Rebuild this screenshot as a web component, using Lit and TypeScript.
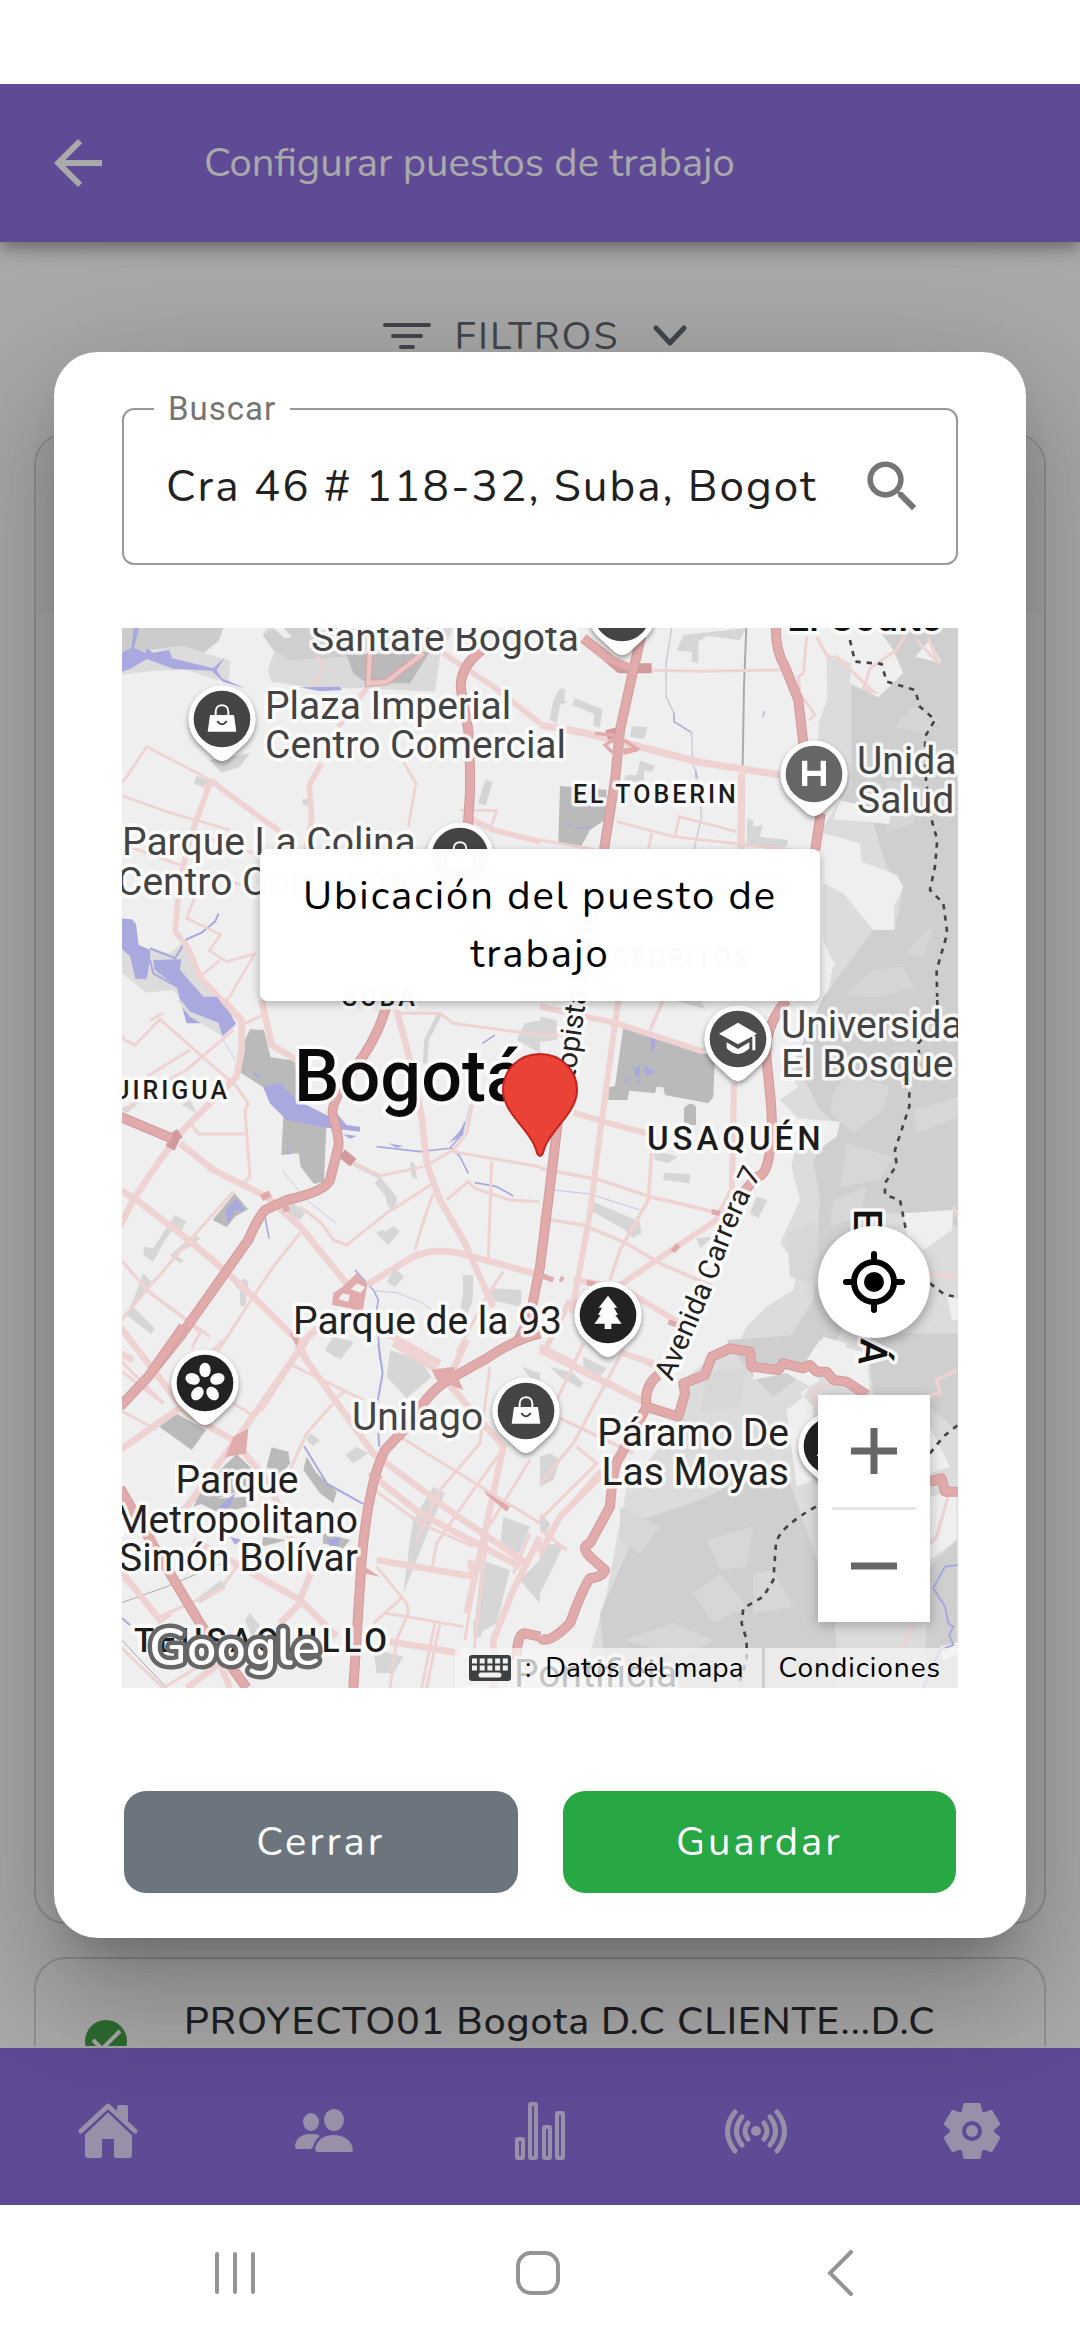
import { LitElement, html, svg, css } from "lit";
import { customElement, property } from "lit/decorators.js";

type Pt = { x: number; y: number; kind: string; tone: string };

const PINS: Pt[] = [
  { x: 622, y: 613, kind: "bag", tone: "#444" },
  { x: 222, y: 719, kind: "bag", tone: "#444" },
  { x: 460, y: 856, kind: "bag", tone: "#444" },
  { x: 814, y: 774, kind: "hospital", tone: "#666" },
  { x: 738, y: 1039, kind: "school", tone: "#4c4c4c" },
  { x: 608, y: 1315, kind: "tree", tone: "#222" },
  { x: 205, y: 1383, kind: "flower", tone: "#222" },
  { x: 526, y: 1411, kind: "bag", tone: "#444" },
  { x: 832, y: 1446, kind: "peak", tone: "#222" },
  { x: 475, y: 1718, kind: "none", tone: "#bbb" },
];

const glyph = (kind: string) => {
  switch (kind) {
    case "bag":
      return svg`<path d="M-36-12H36L43 38H-43Z" fill="#fff"/><path d="M-19-10V-22C-19-48 19-48 19-22V-10" fill="none" stroke="#fff" stroke-width="6"/><path d="M-14 6Q0 26 14 6" fill="none" stroke="#444" stroke-width="6"/>`;
    case "hospital":
      return svg`<path d="M-28-40V36M28-40V36M-28-2H28" stroke="#fff" stroke-width="16" fill="none"/>`;
    case "school":
      return svg`<path d="M-57-16L0-49L57-16L0 16Z M-34 10V28Q0 62 34 28V10L0 30Z M43-10H52V34H43Z" fill="#fff"/>`;
    case "tree":
      return svg`<path d="M0-58L28-22H18L30 0H22L41 26H10V42H-10V26H-41L-22 0H-30L-18-22H-28Z" fill="#fff"/>`;
    case "flower":
      return svg`${[0, 72, 144, 216, 288].map((a) => svg`<ellipse cx="0" cy="-39" rx="17" ry="22" fill="#fff" transform="rotate(${a})"/>`)}<circle r="14" fill="#222"/>`;
    case "peak":
      return svg`<path d="M-46 30L-10-34L12 0L24-14L46 30Z" fill="#fff"/>`;
    default:
      return svg``;
  }
};

const pin = (p: Pt) => svg`
  <g transform="translate(${p.x} ${p.y}) scale(.3333)">
    <path class="pin" d="M-75 68L-25 115Q0 138 25 115L75 68A101 101 0 1 0-75 68Z" fill="#fff"/>
    <circle r="85" fill=${p.tone}/>
    ${glyph(p.kind)}
  </g>`;

/* The tiles are drawn at three units per pixel, two columns by three rows. */
const MAP = svg`
<g transform="translate(120 620) scale(.3333)">
  <path fill="#ccc" d="M0 20H312L296 62L252 98L190 90L150 82L70 95L0 130Z"/>
  <path fill="#dcdcdc" d="M150 82L190 78L252 98L332 122L326 188L300 182L200 150L100 152L0 165V120L70 100Z"/>
  <path fill="#dadada" d="M440 24H1000L960 110L945 215L740 205L590 205L455 185L443 152L462 95L428 45Z"/>
  <path fill="#cfcfcf" d="M470 24H590L680 70L690 110L510 120L462 90L428 45Z"/>
  <path fill="#bababa" d="M680 105L930 95L870 190H740L700 160Z"/>
  <path fill="#efefef" d="M460 24H490L516 50L495 55Z"/>
  <path fill="#d4d4d4" d="M230 468L270 482L258 506L222 490Z M1096 480L1118 486L1098 556L1074 550Z M268 420L390 400L360 440L305 458Z M550 536L568 540V560L546 552Z"/>
  <path fill="#dcdcdc" d="M6 930L60 980L150 1000L190 965L260 1090L340 1190L330 1200H230L160 1110L80 1118L6 1060Z"/>
  <path fill="#a9a9e0" d="M58 20L42 84L75 98L80 85L100 98L148 90L156 115L280 145L315 112L290 150L306 175L376 205L310 186L275 152L160 146L80 117L30 147L0 157V100L34 84L42 20Z
    M0 895L35 898L48 912L56 975L90 990V1020L80 1078L46 1076L30 1008L0 982Z M100 1020L184 1018L180 1050L250 1130L300 1150L345 1210H200L170 1100L104 1050Z M540 202L660 200L665 210L600 214Z"/>
  <path fill="none" stroke="#a9a9e0" stroke-width="6" d="M296 880L285 905L245 938L200 958L165 1015L90 985 M90 1020L100 1060L180 1105L200 1200"/>
  <path fill="none" stroke="#efd2d2" stroke-width="8" d="M0 500L80 380L290 490 M0 525L140 575L330 630 M590 110L615 142L575 200 M850 425L888 490L865 620 M1020 570L1130 572L1110 630 M225 830L200 895L302 944L268 992L320 1025L408 1000 M405 1000L320 1145 M300 1020L240 1070 M180 735L0 670 M90 1200L130 1180 M400 700L220 640 M280 770L420 812"/>
  <path fill="none" stroke="#efd2d2" stroke-width="17" d="M270 490L215 640L180 780L165 935L205 985L240 1070L360 1200 M270 480L350 540L480 635 M740 205L655 320 M1030 585L1120 630L1260 665 M970 100L1120 200L1260 310 M605 430L568 495L575 600L555 700 M250 500L290 485"/>
  <path fill="none" stroke="#d9a0a0" stroke-width="20" d="M750 100L745 190L800 185L910 100"/>
  <path fill="none" stroke="#ecc4c4" stroke-width="14" d="M750 100L745 190L800 185L910 100"/>
  <path class="edge" d="M1085 90Q1010 150 1025 220L1045 330L1050 440V520L1040 680"/>
  <path class="hwy" d="M1085 90Q1010 150 1025 220L1045 330L1050 440V520L1040 680"/>
</g>
<g transform="translate(540 620) scale(.3333)">
  <path fill="#dcdcdc" d="M860 100L930 130L1260 20V1200H850L880 1030L850 960V620L900 540L830 400L838 300L862 240Z"/>
  <path fill="#cfcfcf" d="M935 100L1010 24H1260V1200H900L850 1130L1000 930H1065L1090 800L1040 740L1000 610L880 590L935 500Z"/>
  <path fill="#d6d6d6" d="M1040 480L1150 500L1120 610L1040 640Z M1120 260L1200 300L1160 340L1060 320Z M1150 940L1180 920L1150 1010L1100 1000Z M920 1120L1000 1050L1090 1040L1120 1100L1000 1140Z"/>
  <path fill="#efefef" d="M860 20H1010L1060 90L1090 160L1015 232L930 190L935 110L880 120Z M1125 110L1170 60L1205 130Z M850 640L960 670L965 725L1070 765L1090 800L1062 860V930H1000L910 820L850 790Z M900 540L1050 580L1048 612L880 598Z M850 1010L888 1030L860 1065H842Z"/>
  <path fill="#d6d6d6" d="M430 45L620 24L600 60L500 48L475 65V130L455 125V95L410 92Z M60 205L76 208L72 240L82 245L60 255L50 310L28 300L40 240Z M105 235L187 268L180 322L160 318L162 282L96 255Z M275 318L322 322L312 358L270 350Z M300 422L345 438L335 455L312 450V490L250 480L260 465L290 465Z M622 595L640 602V620L668 615L660 650L745 660L740 680H620Z"/>
  <path fill="#bababa" d="M60 498L200 510L195 600L150 630L120 685L55 665Z"/>
  <path fill="none" stroke="#c8c8d4" stroke-width="4" d="M395 24L378 130V230L402 280V305L455 338L458 430L472 470L485 590L462 690"/>
  <path fill="none" stroke="#a9a9e0" stroke-width="4" d="M402 280V305L452 336 M668 290L674 274 M85 610L95 620 M110 625L150 620 M468 450V475"/>
  <path fill="none" stroke="#aaa" stroke-width="6" d="M619 24L612 200L608 440"/>
  <path fill="none" stroke="#efd2d2" stroke-width="9" d="M300 150L480 154L730 150 M800 50L790 160L775 170L780 220L825 285L808 300 M830 50L865 115L890 110L1000 215L970 208L990 145L1070 90L1095 50 M1130 60L1195 130L1165 55 M0 660L170 690 M230 605L400 650L800 695 M405 645L418 590L590 635 M335 640L325 690"/>
  <path fill="none" stroke="#efd2d2" stroke-width="22" d="M0 315L140 340L280 375L470 425L720 465 M605 460L603 690"/>
  <path class="edge" d="M130 55L200 110L240 145H335"/>
  <path class="edge" d="M305 40L280 150L240 330L225 480L192 690 M200 345L240 335"/>
  <path class="hwy" d="M130 55L205 115L275 145 M305 40L280 150L240 330L225 480L192 690"/>
  <path fill="none" stroke="#e2abab" stroke-width="10" d="M165 340L225 345 M195 375L235 350L290 385L215 395Z M250 400L295 388"/>
  <path class="edge" d="M708 20Q705 90 735 140L775 240L790 370 M842 580L826 690"/>
  <path class="hwy" d="M708 20Q705 90 735 140L775 240L790 370 M842 580L826 690"/>
  <path class="trail" d="M930 60L945 125L1025 132L1040 185L1125 210L1140 260L1185 300L1155 350L1158 480L1175 600L1192 660L1185 740L1170 810L1210 850L1222 940L1190 1050L1192 1150"/>
</g>
<g transform="translate(120 1000) scale(.3333)">
  <path fill="#dcdcdc" d="M170 0L210 50L310 110L350 70L300 20Z"/>
  <path fill="#a9a9e0" d="M175 -10L290 -10L330 40L348 72L308 108L295 68L210 35Z"/>
  <path fill="#bababa" d="M390 88L432 90L452 172L525 182L540 310L620 360L612 545L582 552L542 500L536 460L484 465L490 350L450 310L430 262L362 218L370 130Z M344 580L384 628L345 650L320 682L278 660Z"/>
  <path fill="#a9a9e0" d="M430 260L480 248L530 300L630 350L650 340L680 375L720 380V395L610 382L500 360L450 310Z M670 403L710 408L690 416Z M400 212L425 235L405 228Z M350 595L375 632L345 630L325 675L315 630Z M805 430L850 438L830 443Z M1035 365L1030 405L985 430L1018 395Z M505 440L508 465L500 460Z"/>
  <path fill="none" stroke="#a9a9e0" stroke-width="5" d="M770 440L900 455L990 445L1020 410L1035 365 M990 440L1020 470L1045 520 M1065 548L1130 560L1180 588 M435 650L447 715 M705 810L760 870L775 900L770 930L780 1080 M1087 130L1125 105"/>
  <path fill="none" stroke="#c9c9e4" stroke-width="3" d="M310 120L345 180 M485 510L560 600L648 670 M760 872L830 878L900 905L935 930 M1050 315L1030 400"/>
  <path fill="#d6d6d6" d="M165 645L200 665L185 690L165 680L135 720L100 785L70 765L72 740L100 745Z M70 820L95 845L70 880L40 920L104 985L94 1002L18 945L40 900Z M370 835L385 845L375 920L360 915V870L345 860Z M220 705L242 715L210 740L160 765L192 780L180 790L150 765Z M780 530L830 590V610L815 635L800 610L798 590L765 550Z M870 485L884 490L892 540L875 530Z M820 678L840 695L805 735L768 700L785 690L795 695Z M825 805L852 830L825 862L800 845Z M1028 825H1060L1058 900L1040 950L1022 920L1030 880Z M1110 865L1205 870L1202 920L1110 900Z M1215 70L1260 60V160L1190 120Z M640 1010L700 1025L650 1075L615 1050Z M510 600L555 640L540 660L505 645Z M185 315L210 300L230 340Z M0 325L60 305L20 340Z"/>
  <path fill="none" stroke="#d6d6d6" stroke-width="14" d="M960 40L920 120L915 190 M700 490L780 530"/>
  <path fill="none" stroke="#efd2d2" stroke-width="9" d="M0 100L15 120L45 135L120 58L350 260L385 310L375 330L390 530L365 555 M80 230L210 150 M340 90L200 210L70 280L20 330 M440 40L355 80 M215 375L235 402H375 M340 575L210 720L80 870L0 965 M0 775L80 870L270 1010 M540 700L460 800L400 890L290 1060 M700 490L780 528L910 500 M940 550L800 640L680 735L640 720L605 670L540 620 M940 580L905 680L885 750 M980 600L1045 545L1065 565L1170 600L1260 605 M1115 485L1105 780 M1000 455L1260 500 M930 490L1000 450L1040 400L1060 300 M830 40L960 40L1000 70L1260 105 M90 880L200 960L240 1000L215 1045 M1150 815L1100 890L1010 1060"/>
  <path fill="none" stroke="#efd2d2" stroke-width="20" d="M310 0L365 60V150L350 230L190 390L120 480L40 600L0 680 M0 570L50 600L180 700L290 790L400 890L530 1020L560 1080 M180 430L280 510L440 590L540 680L680 850 M425 0L455 135L530 180 M830 30L870 180L905 350L920 490L960 600L1030 720L1120 920 M740 855L880 770Q950 740 1040 765L1240 820 M800 1000L960 1090 M600 980L530 1040 M0 1060L40 1080"/>
  <path class="edge" d="M0 350L155 415L180 400 M150 445L165 415 M665 460L700 488"/>
  <path class="hwy" d="M0 350L155 415"/>
  <path class="edge" d="M798 20Q780 90 735 160L660 270Q630 330 640 350Q660 420 655 440L630 540Q615 575 500 600L435 630Q410 660 385 720L180 1010L100 1110"/>
  <path class="hwy" d="M798 20Q780 90 735 160L660 270Q630 330 640 350Q660 420 655 440L630 540Q615 575 500 600L435 630Q410 660 385 720L180 1010L100 1110"/>
  <path fill="#e2abab" fill-rule="evenodd" d="M710 820L742 852L728 935L690 925L636 915L640 880L668 860Z M712 850L735 862L722 878L692 868Z M668 880L690 885L685 905L655 898Z"/>
  <path fill="none" stroke="#e2abab" stroke-width="20" d="M425 595L450 580 M495 610L500 635"/>
</g>
<g transform="translate(540 1000) scale(.3333)">
  <path fill="#dcdcdc" d="M720 190H1260V1100H560L620 980L680 920L760 870L775 800L720 730L780 600L755 500L780 360L720 300Z"/>
  <path fill="#cfcfcf" d="M850 -10H1260V680L1100 640L1000 640L900 1000L850 1090H700L820 900L840 600L820 480L870 420L900 380L840 330L800 250L760 190Z"/>
  <path fill="#d7d7d7" d="M920 220L1050 260L1030 330L940 400L870 340L880 280Z M920 430L1060 470L1020 540L900 560Z M1120 330L1260 290V350L1130 400Z M880 600L980 560L960 650L870 680Z M740 700L830 660L840 860L750 830Z"/>
  <path fill="#efefef" d="M770 355L900 365L890 410L830 452L760 440Z M1090 640L1240 630L1236 690L1150 750L1100 700Z M850 1010L920 1030L900 1080H820Z M1220 880L1260 900V960L1235 960Z M690 190L760 240L775 260L720 300L740 340L700 330Z"/>
  <path fill="#bababa" d="M250 80L492 160L525 170L520 290L505 310L375 285L370 262L350 260L345 280L268 272L262 300L205 300V262L225 258Z M432 325Q452 300 468 320V375H432Z"/>
  <path fill="#a9a9e0" d="M330 108L346 112L345 140L335 160Z M282 205L300 195V225L285 230Z M310 195L346 215L320 230Z M250 240L270 232L262 248Z M292 235L305 240L295 250Z"/>
  <path fill="#d6d6d6" d="M340 450L414 470L385 490L345 480Z M372 518L450 522V550L370 540Z M160 605L300 665L304 700L278 715L255 690L150 630Z M650 590L682 600L655 655L630 640Z M0 50L50 60V120L0 125Z M470 715L520 710L480 745Z M380 -5L480 0L498 28Z"/>
  <path fill="none" stroke="#c4c4e0" stroke-width="3" d="M40 570L150 582L300 630"/>
  <path fill="none" stroke="#efd2d2" stroke-width="11" d="M0 105H70 M370 0L330 90 M0 505L180 540L330 590L540 640 M0 655L130 675L260 730L360 790L520 860 M335 460L325 600L240 750L210 840 M1170 825L1260 830 M1240 620L1260 660"/>
  <path fill="none" stroke="#efd2d2" stroke-width="18" d="M0 20L230 70L490 155 M235 0L180 400L150 640L95 940 M90 335L190 365L320 400 M582 250L576 570L530 660L380 760L240 855 M100 840L240 860L420 970 M90 900L10 1060 M0 1040L100 1090 M250 1060L400 1110"/>
  <path class="edge" d="M60 310L30 560L0 800L-30 950L-70 1030 M740 0Q670 80 680 180L692 300Q700 380 690 450Q680 530 650 530L600 590"/>
  <path class="hwy" d="M60 310L30 560L0 800L-30 950L-70 1030 M740 0Q670 80 680 180L692 300Q700 380 690 450Q680 530 650 530L600 590"/>
  <path fill="none" stroke="#e2abab" stroke-width="16" d="M0 825L40 840 M60 835L70 840 M140 848L165 852 M385 965L425 980 M398 755L415 735 M515 635L540 640"/>
  <path class="trail" d="M1192 0V60L1135 130L1140 200L1080 250L1108 270V320L1065 450L1070 495L1035 550V585L1080 600L1100 700 M1170 850L1215 885L1250 890"/>
</g>
<g transform="translate(120 1340) scale(.3333)">
  <path fill="#bababa" d="M160 215L258 270L215 330L118 260Z M350 342L400 390L395 440L220 500L240 460L310 380Z M455 322L505 335L510 370L480 410L440 380Z M560 350L590 400L650 455L640 490L600 460L550 390Z M430 590L500 600L425 620Z M610 580L690 600L670 625L608 610Z M220 480L380 470L380 500L300 520Z"/>
  <path fill="#a9a9e0" d="M345 460L330 500L290 510L320 480Z M330 590L365 600L345 614Z M620 600L660 590L655 615L630 618Z"/>
  <path fill="none" stroke="#a9a9e0" stroke-width="6" d="M552 318L622 432L730 492 M775 10L788 100L770 200L778 320 M0 830L30 855"/>
  <path fill="#d6d6d6" d="M810 30L900 60L935 110L860 175L800 110Z M940 440L975 460L930 560L850 760L870 600L880 540Z M1150 530L1230 560L1200 640L1140 620Z M1085 660L1170 690L1130 850L1060 890Z M1200 720L1260 660V790Z M640 0L700 10L660 60Z M570 280L600 300L580 318L560 300Z M710 320L745 340L700 370L675 345Z M305 720L318 745L240 790L225 780Z M390 820L430 870L400 900L375 840Z M760 925L850 950L820 1000H770Z M1060 840H1085V890H1060Z M1205 80L1260 100V150Z"/>
  <path fill="none" stroke="#aaa" stroke-width="3" d="M0 790L140 740L330 660 M0 895L140 1044"/>
  <path fill="none" stroke="#efd2d2" stroke-width="9" d="M0 60L130 190L0 90 M0 210L110 270 M310 0L270 40 M340 190L405 230 M505 70L730 180 M640 190L560 280L510 390 M680 150L640 180 M840 290L1260 550 M1110 80L1080 310L960 450L890 600 M1140 340L1060 450L950 610L935 690 M1230 360L1100 570L1070 680L1035 900 M750 440L900 550L1060 620 M760 850L850 770 M770 680L860 790L865 820L830 900 M800 820L1030 860 M830 900L810 1044 M960 850L920 1044 M945 850L905 1044 M1100 600L1050 1044 M0 920L130 1044 M120 830L300 750L350 680 M130 1044L350 910 M1180 700L1230 580"/>
  <path fill="none" stroke="#efd2d2" stroke-width="20" d="M0 330L200 190 M0 -40L200 220L340 300L450 430L520 620 M560 0L370 270L200 500L80 600 M530 20L760 340L1000 520L1220 670 M530 40L420 210 M0 690L120 840L150 820 M220 600L540 780L650 890 M540 780L580 680 M540 790L480 850 M820 10L950 90L1150 320L1090 600L1040 820 M1040 0L1000 90 M770 660L1060 710L1050 660 M750 400L900 520L1200 680 M1260 590L1180 750L1120 900V1044 M810 905L1020 940 M0 700L40 740 M200 1044L300 970L330 1044"/>
  <path class="edge" d="M190 -40L85 110L0 200 M1260 -20Q1180 0 1100 55L985 120Q920 160 880 240L795 330Q770 380 755 450Q735 540 725 660L700 1044 M0 445L90 600L240 850L380 1044 M1190 960Q1190 880 1215 880L1260 890"/>
  <path class="hwy" d="M190 -40L85 110L0 200 M1260 -20Q1180 0 1100 55L985 120Q920 160 880 240L795 330Q770 380 755 450Q735 540 725 660L700 1044 M0 445L90 600L240 850L380 1044 M1190 960Q1190 880 1215 880L1260 890"/>
  <path fill="#e2abab" d="M385 265L378 340L316 352L340 290Z M745 400L790 410L760 430Z M935 90L1000 80L1030 150L950 120Z M1090 450L1170 500L1160 515L1100 465Z M735 680L780 710L730 700Z M510 -20L545 -25L530 20Z"/>
</g>
<g transform="translate(540 1340) scale(.3333)">
  <path fill="#dcdcdc" d="M440 110L560 20H1260V1050H120L200 760L260 440L420 250Z"/>
  <path fill="#cfcfcf" d="M560 0L840 -20L790 100L700 170L640 110L600 60Z M300 540L480 480L560 440L740 400L880 800L900 1050H200L180 820L260 640Z M980 -20H1260V280L1170 200L1000 160Z M1170 680L1250 600V1050H1150Z"/>
  <path fill="#d7d7d7" d="M240 500L360 560L300 640L240 600Z M500 600L640 560L620 680L540 690Z M460 760L540 700L620 800L520 850Z M640 700L700 690L760 800L640 820Z M250 900L400 850L520 900L430 950Z M500 100L620 80L600 200L480 220Z"/>
  <path fill="#efefef" d="M640 80L800 90L840 120L780 160L820 200V420L770 440L740 210L790 170L810 140L740 100L640 120Z M840 0L980 40L990 150L930 140L850 90L800 60Z M1170 260L1230 380L1170 400Z M1170 470L1250 450V600L1170 660Z M1200 920L1260 905V940L1210 960Z"/>
  <path fill="#d6d6d6" d="M130 50L200 85L180 110L130 80Z M30 80L100 100L130 130L120 145L60 110Z M30 340L60 360L40 420L0 440V350Z M0 520L30 550L20 580L0 570Z M0 610L70 615L50 660L0 760Z"/>
  <path fill="none" stroke="#efd2d2" stroke-width="10" d="M130 10L0 290 M250 30L100 310L0 430 M0 20L350 200 M60 235L280 340 M200 120L340 200 M110 320L170 370L70 470L0 540 M180 390L60 530L0 650 M0 570L80 630 M260 40L360 90 M860 130L815 160L840 210 M1250 90L1190 120L1200 160L1170 165 M1230 450L1190 590L1170 610 M1120 840L1100 900L1075 930"/>
  <path fill="none" stroke="#efd2d2" stroke-width="20" d="M230 360L60 530L0 640 M0 30L320 190"/>
  <path class="edge" d="M355 105Q310 140 320 200L240 350Q220 370 210 500L150 610Q120 620 150 650L195 690Q190 710 150 715Q130 740 90 850Q20 920 0 890 M320 200L415 230L435 160L430 130L495 105L515 50L570 25L630 35L635 80L715 90L730 70L790 85L810 75L830 95H860L880 120L920 125L980 165 M1170 425L1205 415L1215 455H1260"/>
  <path class="hwy" d="M355 105Q310 140 320 200L240 350Q220 370 210 500L150 610Q120 620 150 650L195 690Q190 710 150 715Q130 740 90 850Q20 920 0 890 M320 200L415 230L435 160L430 130L495 105L515 50L570 25L630 35L635 80L715 90L730 70L790 85L810 75L830 95H860L880 120L920 125L980 165 M1170 425L1205 415L1215 455H1260"/>
  <path fill="none" stroke="#a9a9e0" stroke-width="6" d="M1255 675L1215 680L1180 745L1215 800L1225 850L1240 860L1228 885L1240 915L1200 930L1150 1044"/>
  <path class="trail" d="M828 500Q720 560 708 610L700 720L670 770L610 805L605 850L620 900V960L595 1040 M1170 340L1210 290L1260 250"/>
</g>`;

const LABELS = svg`
  <g class="poi">
    <text x="311" y="651">Santafé Bogotá</text>
    <text x="265" y="719">Plaza Imperial</text>
    <text x="265" y="758">Centro Comercial</text>
    <text x="122" y="855">Parque La Colina</text>
    <text x="117" y="895">Centro Comercial</text>
    <text x="857" y="774">Unidad</text>
    <text x="857" y="813">Salud</text>
    <text x="781" y="1038">Universidad</text>
    <text x="781" y="1077">El Bosque</text>
    <text x="352" y="1430">Unilago</text>
    <text x="514" y="1687">Pontificia</text>
  </g>
  <g class="poi park">
    <text x="293" y="1334">Parque de la 93</text>
    <text x="237" y="1493" text-anchor="middle">Parque</text>
    <text x="358" y="1533" text-anchor="end">Metropolitano</text>
    <text x="358" y="1571" text-anchor="end">Simón Bolívar</text>
    <text x="789" y="1446" text-anchor="end">Páramo De</text>
    <text x="789" y="1485" text-anchor="end">Las Moyas</text>
  </g>
  <g class="area">
    <text x="573" y="803">EL TOBERIN</text>
    <text x="612" y="967">CEDRITOS</text>
    <text x="342" y="1006">SUBA</text>
    <text x="230" y="1099" text-anchor="end">QUIRIGUA</text>
  </g>
  <g class="area big">
    <text x="647" y="1150">USAQUÉN</text>
    <text x="134" y="1652">TEUSAQUILLO</text>
  </g>
  <text class="town" transform="translate(854 1209) rotate(90)">E</text>
  <text class="town" transform="translate(861 1338) rotate(96)">Á</text>
  <text class="town" x="787" y="631">El Codito</text>
  <text class="city" x="294" y="1101">Bogotá</text>
  <path id="ruta" fill="none" d="M672 1382Q700 1318 718 1275Q730 1235 757 1182L775 1145"/>
  <text class="street"><textPath href="#ruta">Avenida Carrera 7</textPath></text>
  <text class="street" transform="translate(570 1113) rotate(-82)">Autopista Norte</text>`;

const ICONS: Record<string, unknown> = {
  home: svg`<path d="M39 7Q39 6 41 6H48Q50 6 50 8V25L39 14Z"/><path d="M30 13L54 35V56Q54 59 51 59H38Q36 59 36 57V40H24V57Q24 59 22 59H10Q7 59 7 56V35Z"/><path d="M3 32L30 7L57 32" fill="none" stroke="currentColor" stroke-width="5" stroke-linecap="round" stroke-linejoin="round"/><path d="M6 35L30 12L54 35" fill="none" stroke="#8c6dde" stroke-width="2"/>`,
  people: svg`<ellipse cx="17" cy="23" rx="8" ry="9"/><ellipse cx="40" cy="21" rx="10" ry="11"/><path d="M1 47C2 38 9 35 16 35C20 35 24 35 26 37C22 40 20 44 19 48Q18 50 16 50H3Q1 50 1 47Z"/><path d="M21 50C23 40 31 36 40 36C49 36 58 41 59 51Q59 53 57 53H24Q21 53 21 50Z"/>`,
  bars: svg`<g fill="none" stroke="currentColor" stroke-width="4"><rect x="7" y="40" width="6" height="19" rx="1"/><rect x="20" y="5" width="6" height="54" rx="1"/><rect x="34" y="28" width="6" height="31" rx="1"/><rect x="47" y="14" width="6" height="45" rx="1"/></g>`,
  signal: svg`<circle cx="30" cy="32" r="5"/><g fill="none" stroke="currentColor" stroke-width="5" stroke-linecap="round"><path d="M22 24Q16 32 22 40M16 18Q5 32 16 46M9 13Q-6 32 9 52M38 24Q44 32 38 40M44 18Q55 32 44 46M51 13Q66 32 51 52"/></g>`,
  gear: svg`${[0, 60, 120].map((a) => svg`<path d="M23 4H37Q39 4 39 6L40 12L44 16V48L40 52L39 58Q39 60 37 60H23Q21 60 21 58L20 52L16 48V16L20 12L21 6Q21 4 23 4Z" transform="rotate(${a} 30 32)"/>`)}<circle cx="30" cy="32" r="8" fill="none" stroke="#8c6dde" stroke-width="4"/>`,
};

@customElement("bogota-map")
export class BogotaMap extends LitElement {
  static styles = css`
    :host { display: block; position: relative; overflow: hidden; aspect-ratio: 836 / 1060; background: #efefef; font-family: Nunito, "Noto Sans", sans-serif; }
    .tiles { display: block; width: 100%; height: 100%; }
    .edge, .hwy { fill: none; stroke-linejoin: round; }
    .edge { stroke: #d29a9b; stroke-width: 30; }
    .hwy { stroke: #e2abab; stroke-width: 24; }
    .trail { fill: none; stroke: #444; stroke-width: 8; stroke-dasharray: 16 18; }
    .pin { filter: drop-shadow(0 8px 8px #0006); }
    text { font-family: Roboto, sans-serif; paint-order: stroke; stroke: #fff; stroke-width: 7px; stroke-linejoin: round; stroke-opacity: .85; }
    .poi { font-size: 39px; fill: #444; }
    .park { fill: #222; }
    .area { font-size: 25px; font-weight: 500; letter-spacing: 3px; fill: #1c1c1c; }
    .big { font-size: 33px; letter-spacing: 4px; }
    .town { font-size: 39px; font-weight: 500; fill: #111; }
    .city { font-size: 72px; font-weight: 500; fill: #0a0a0a; }
    .street { font-size: 29px; fill: #222; }
    .brand { font: 600 52px Nunito, Lato, sans-serif; fill: #fff; stroke: #666; stroke-width: 9px; stroke-opacity: 1; }
    .marker { position: absolute; left: calc(50% - 38px); top: 40%; width: 76px; height: 108px; }
    .tip { position: absolute; left: 50%; top: 221px; transform: translateX(-50%); box-sizing: border-box; width: 67%; padding: 18px 32px; border-radius: 8px; background: #fffffffb; box-shadow: 0 3px 8px #0004; text-align: center; font-size: 40px; line-height: 58px; letter-spacing: 2px; color: #000; }
    .tools { position: absolute; right: 28px; bottom: 66px; display: grid; gap: 57px; width: 112px; }
    button { display: grid; place-items: center; border: 0; padding: 0; background: none; }
    .locate { height: 112px; border-radius: 50%; background: #fff; box-shadow: 0 4px 12px #0005; }
    .zoom { background: #fff; box-shadow: 0 3px 12px #0004; }
    .zoom button { width: 100%; height: 112px; }
    .line { height: 3px; margin: 0 14px; background: #e6e6e6; }
    .legal { position: absolute; right: 0; bottom: 0; display: flex; gap: 3px; font-size: 28px; line-height: 40px; }
    .legal > div { display: flex; align-items: center; background: #f5f5f5b8; color: #000; }
    .data { gap: 14px; padding: 0 18px 0 14px; }
    .terms { padding: 0 17px 0 14px; letter-spacing: 1px; }
    .keys { padding: 0; }
    a { color: inherit; text-decoration: none; }
    .keys svg { display: block; }
  `;

  render() {
    return html`
      <svg class="tiles" viewBox="122 628 836 1060" preserveAspectRatio="xMidYMid slice" role="img" aria-label="Mapa de Bogotá">
        ${MAP}${PINS.map(pin)}${LABELS}
        <text class="brand" x="149" y="1665">Google</text>
      </svg>
      <svg class="marker" viewBox="0 0 76 108" aria-hidden="true">
        <path d="M38 2C17 2 1 18 1 38C1 62 30 78 35 101Q38 107 41 101C46 78 75 62 75 38C75 18 59 2 38 2Z" fill="#ea4335" stroke="#c5221f" stroke-width="2"/>
      </svg>
      <div class="tip">Ubicación del puesto de trabajo</div>
      <div class="tools">
        <button class="locate" aria-label="Mi ubicación">
          <svg width="64" height="64" viewBox="0 0 64 64" fill="none" stroke="#000" stroke-width="6" stroke-linecap="round">
            <circle cx="32" cy="32" r="20"/><path d="M32 4V11M32 53V60M4 32H11M53 32H60"/><circle cx="32" cy="32" r="10" fill="#000" stroke="none"/>
          </svg>
        </button>
        <div class="zoom">
          <button aria-label="Acercar"><svg width="46" height="46" viewBox="0 0 46 46" stroke="#666" stroke-width="7"><path d="M0 23H46M23 0V46"/></svg></button>
          <div class="line"></div>
          <button aria-label="Alejar"><svg width="46" height="46" viewBox="0 0 46 46" stroke="#666" stroke-width="7"><path d="M0 23H46"/></svg></button>
        </div>
      </div>
      <div class="legal">
        <div class="data">
          <button class="keys" aria-label="Combinaciones de teclas">
            <svg width="42" height="26" viewBox="0 0 42 26"><rect width="42" height="26" rx="3" fill="#3c4043"/><path d="M3 6H39M3 13H39" stroke="#f3f0f0" stroke-width="5" stroke-dasharray="5 2.7"/><path d="M12 20H30" stroke="#f3f0f0" stroke-width="5" stroke-linecap="round"/></svg>
          </button>
          <span>:</span><span>Datos del mapa</span>
        </div>
        <div class="terms"><a href="#condiciones">Condiciones</a></div>
      </div>`;
  }
}

@customElement("tab-link")
export class TabLink extends LitElement {
  @property() icon = "home";
  @property() label = "";
  static styles = css`
    :host { flex: 1; display: grid; }
    .link { display: grid; place-items: center; padding-top: 4px; color: #dfd5f8; }
    .glyph { overflow: visible; }
  `;
  render() {
    return html`<a class="link" href="#${this.icon}" aria-label=${this.label}>
      <svg class="glyph" width="60" height="60" viewBox="0 0 60 60" fill="currentColor">${ICONS[this.icon]}</svg></a>`;
  }
}

@customElement("app-root")
export class AppRoot extends LitElement {
  static styles = css`
    :host { display: flex; flex-direction: column; min-height: 100vh; background: #fff; font-family: Nunito, "Noto Sans", sans-serif; font-size: 39px; }
    .status { height: 84px; }
    .screen { position: relative; flex: 1; display: flex; flex-direction: column; overflow: hidden; background: #fafafa; }
    .bar { display: flex; align-items: center; gap: 90px; height: 158px; padding: 0 42px; background: #8c6dde; color: #fafafa; box-shadow: 0 6px 11px -3px #0003, 0 11px 14px #0002, 0 3px 28px #0002; }
    h1, h2 { margin: 0; font-size: inherit; font-weight: 400; }
    h1 { font-size: 40px; }
    button { border: 0; padding: 0; background: none; font: inherit; color: inherit; }
    svg { display: block; }
    .content { flex: 1 1 0; min-height: 0; overflow: hidden; display: flex; flex-direction: column; gap: 33px; margin-bottom: 2px; padding: 68px 34px 0; }
    .filters { display: flex; justify-content: center; align-items: center; gap: 24px; height: 52px; margin-bottom: 38px; padding-right: 10px; color: #61696f; letter-spacing: 2px; }
    .filters svg:last-child { margin-left: 10px; }
    .card { flex: none; border: 2px solid #d4d4d4; border-radius: 32px; }
    .first { height: 1491px; box-sizing: border-box; overflow: hidden; }
    .cap { height: 178px; background: #f5f5f5; }
    .head { display: flex; align-items: center; gap: 57px; height: 124px; padding: 0 49px; color: #2d2f31; }
    .head svg { flex: none; margin-top: 40px; }
    .head h2 { font-weight: 500; letter-spacing: 1px; white-space: nowrap; }
    .tabs { display: flex; height: 157px; background: #8c6dde; }
    .scrim { position: absolute; inset: 0; display: flex; align-items: center; padding: 0 54px; background: #00000052; }
    .dialog { flex: 1; min-width: 0; padding: 37px 68px 45px; border-radius: 44px; background: #fff; box-shadow: 0 31px 42px -20px #0003, 0 68px 107px 8px #00000024, 0 25px 129px 22px #0000001f; }
    .field { margin: 0 0 63px; min-width: 0; padding: 0 30px 18px; border: 2px solid #999; border-radius: 12px; font-family: Roboto, sans-serif; }
    legend { padding: 0 14px; font-size: 33px; line-height: 40px; letter-spacing: 1px; color: #757575; }
    .row { display: flex; align-items: center; gap: 36px; height: 116px; padding: 0 0 0 12px; }
    input { flex: 1; min-width: 0; padding: 0; border: 0; outline: 0; background: none; font-family: Nunito, "Noto Sans", sans-serif; font-size: 44px; letter-spacing: 2px; color: #212121; }
    .actions { display: flex; gap: 45px; margin: 103px 2px 0; }
    .action { flex: 1; height: 102px; border-radius: 22px; color: #fff; font-size: 40px; letter-spacing: 3px; }
    .close { background: #6c757d; }
    .save { background: #28a745; }
    .system { display: flex; align-items: center; justify-content: space-between; height: 135px; padding: 0 217px 0 213px; }
  `;

  render() {
    return html`
      <div class="status"></div>
      <main class="screen">
        <header class="bar">
          <button aria-label="Volver"><svg width="72" height="72" viewBox="0 0 24 24" fill="currentColor"><path d="M20 11H7.8l5.6-5.6L12 4l-8 8 8 8 1.4-1.4L7.8 13H20z"/></svg></button>
          <h1>Configurar puestos de trabajo</h1>
        </header>
        <section class="content">
          <button class="filters">
            <svg width="48" height="28" viewBox="0 0 48 28" stroke="currentColor" stroke-width="4" stroke-linecap="round"><path d="M2 3H46M10 14H38M18 25H30"/></svg>
            FILTROS
            <svg width="34" height="22" viewBox="0 0 34 22" fill="none" stroke="currentColor" stroke-width="5" stroke-linecap="round" stroke-linejoin="round"><path d="M3 3L17 18L31 3"/></svg>
          </button>
          <article class="card first"><div class="cap"></div></article>
          <article class="card">
            <div class="head">
              <svg width="42" height="42" viewBox="0 0 42 42"><circle cx="21" cy="21" r="21" fill="#43a047"/><path d="M8 20L17 29L35 11" fill="none" stroke="#fafafa" stroke-width="4"/></svg>
              <h2>PROYECTO01 Bogota D.C CLIENTE...D.C</h2>
            </div>
          </article>
        </section>
        <nav class="tabs">
          <tab-link icon="home" label="Inicio"></tab-link>
          <tab-link icon="people" label="Personas"></tab-link>
          <tab-link icon="bars" label="Reportes"></tab-link>
          <tab-link icon="signal" label="Transmisión"></tab-link>
          <tab-link icon="gear" label="Ajustes"></tab-link>
        </nav>
        <div class="scrim">
          <section class="dialog" role="dialog" aria-label="Ubicación del puesto de trabajo">
            <fieldset class="field">
              <legend><label for="q">Buscar</label></legend>
              <div class="row">
                <input id="q" type="text" value="Cra 46 # 118-32, Suba, Bogot" />
                <button aria-label="Buscar dirección"><svg width="67" height="67" viewBox="0 0 24 24" fill="#757575"><path d="M15.5 14h-.79l-.28-.27A6.47 6.47 0 0 0 16 9.5 6.5 6.5 0 1 0 9.5 16c1.61 0 3.09-.59 4.23-1.57l.27.28v.79l5 4.99L20.49 19l-4.99-5zm-6 0C7.01 14 5 11.99 5 9.5S7.01 5 9.5 5 14 7.01 14 9.5 11.99 14 9.5 14z"/></svg></button>
              </div>
            </fieldset>
            <bogota-map></bogota-map>
            <div class="actions">
              <button class="action close">Cerrar</button>
              <button class="action save">Guardar</button>
            </div>
          </section>
        </div>
      </main>
      <footer class="system">
        <button aria-label="Recientes"><svg width="44" height="44" viewBox="0 0 44 44" stroke="#949494" stroke-width="4" stroke-linecap="round"><path d="M4 3V41M22 3V41M40 3V41"/></svg></button>
        <button aria-label="Inicio"><svg width="44" height="44" viewBox="0 0 44 44" fill="none" stroke="#949494" stroke-width="4"><rect x="2" y="2" width="40" height="40" rx="13"/></svg></button>
        <button aria-label="Atrás"><svg width="44" height="46" viewBox="0 0 44 46" fill="none" stroke="#949494" stroke-width="4" stroke-linecap="round"><path d="M32 2L11 23L32 44"/></svg></button>
      </footer>`;
  }
}
